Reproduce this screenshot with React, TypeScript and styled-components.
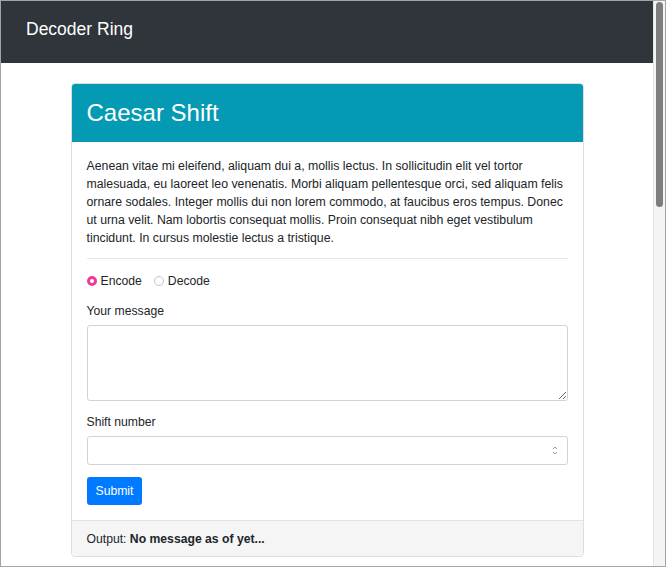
import styled, { createGlobalStyle } from "styled-components";

const GlobalStyle = createGlobalStyle`
  html, body {
    margin: 0;
    background: #fff;
  }
  body {
    font-family: "Liberation Sans", Arial, sans-serif;
    color: #212529;
  }
`;

const Frame = styled.div`
  width: 666px;
  height: 567px;
  box-sizing: border-box;
  border: 1px solid #a4a4a4;
  display: flex;
  overflow: hidden;
`;

const Viewport = styled.div`
  flex: 1;
  overflow: hidden;
  background: #fff;
`;

const Scrollbar = styled.div`
  width: 12px;
  box-sizing: border-box;
  background: #f4f4f4;
  border-left: 1px solid #e2e2e2;
  padding: 1px 0 0 2px;
`;

const Thumb = styled.div`
  width: 7px;
  height: 205px;
  border-radius: 4px;
  background: #7d7d7d;
`;

const Navbar = styled.nav`
  height: 62px;
  box-sizing: border-box;
  background: #30343b;
  display: flex;
  align-items: center;
  padding: 0 25px 5px;
`;

const Brand = styled.a`
  color: #fff;
  font-size: 17.5px;
  text-decoration: none;
`;

const Card = styled.section`
  max-width: 513px;
  margin: 20px auto 0;
  box-sizing: border-box;
  border: 1px solid #dedede;
  border-radius: 4px;
  overflow: hidden;
`;

const CardHeader = styled.header`
  height: 58px;
  background: #059ab4;
  display: flex;
  align-items: center;
  padding: 0 15px;
`;

const Title = styled.h4`
  margin: 0;
  color: #fff;
  font-size: 24px;
  font-weight: 400;
`;

const CardBody = styled.div`
  padding: 15px;
`;

const Intro = styled.p`
  margin: 0;
  font-size: 12.3px;
  line-height: 18px;
`;

const Divider = styled.hr`
  margin: 11px 0 13px;
  border: 0;
  border-top: 1px solid #e6e6e6;
`;

const RadioRow = styled.div`
  display: flex;
  gap: 12px;
  height: 18px;
  align-items: center;
  margin-bottom: 12px;
`;

const RadioLabel = styled.label`
  display: flex;
  align-items: center;
  gap: 4px;
  font-size: 12.2px;
`;

const Radio = styled.input`
  appearance: none;
  margin: 0;
  width: 10px;
  height: 10px;
  box-sizing: border-box;
  border-radius: 50%;
  border: 1px solid #c4c4c4;
  background: #fff;
  &:checked {
    border: 3px solid #f03a97;
  }
`;

const Field = styled.div<{ $gap: number }>`
  margin-bottom: ${(p) => p.$gap}px;
`;

const Label = styled.label`
  display: block;
  font-size: 12.2px;
  line-height: 18px;
  margin-bottom: 5px;
`;

const TextArea = styled.textarea`
  display: block;
  width: 100%;
  height: 76px;
  box-sizing: border-box;
  border: 1px solid #ced4da;
  border-radius: 3px;
  resize: vertical;
  font-family: inherit;
`;

const NumberWrap = styled.div`
  position: relative;
`;

const NumberInput = styled.input`
  display: block;
  width: 100%;
  height: 29px;
  box-sizing: border-box;
  border: 1px solid #ced4da;
  border-radius: 3px;
  font-family: inherit;
  &::-webkit-inner-spin-button,
  &::-webkit-outer-spin-button {
    -webkit-appearance: none;
    margin: 0;
  }
`;

const Spinner = styled.svg`
  position: absolute;
  right: 10px;
  top: 9px;
`;

const SubmitButton = styled.button`
  height: 28px;
  padding: 0 9px;
  border: 0;
  border-radius: 3px;
  background: #007bff;
  color: #fff;
  font-family: inherit;
  font-size: 12.2px;
`;

const CardFooter = styled.footer`
  border-top: 1px solid #e2e2e2;
  background: #f5f5f5;
  padding: 9px 15px 8px;
  font-size: 12.2px;
  line-height: 18px;
`;

export default function App() {
  return (
    <>
      <GlobalStyle />
      <Frame>
        <Viewport>
          <Navbar>
            <Brand href="#">Decoder Ring</Brand>
          </Navbar>
          <Card>
            <CardHeader>
              <Title>Caesar Shift</Title>
            </CardHeader>
            <CardBody>
              <Intro>
                Aenean vitae mi eleifend, aliquam dui a, mollis lectus. In sollicitudin elit vel
                tortor malesuada, eu laoreet leo venenatis. Morbi aliquam pellentesque orci, sed
                aliquam felis ornare sodales. Integer mollis dui non lorem commodo, at faucibus
                eros tempus. Donec ut urna velit. Nam lobortis consequat mollis. Proin consequat
                nibh eget vestibulum tincidunt. In cursus molestie lectus a tristique.
              </Intro>
              <Divider />
              <RadioRow>
                <RadioLabel>
                  <Radio type="radio" name="mode" defaultChecked />
                  Encode
                </RadioLabel>
                <RadioLabel>
                  <Radio type="radio" name="mode" />
                  Decode
                </RadioLabel>
              </RadioRow>
              <Field $gap={12}>
                <Label>Your message</Label>
                <TextArea />
              </Field>
              <Field $gap={12}>
                <Label>Shift number</Label>
                <NumberWrap>
                  <NumberInput type="number" />
                  <Spinner width="6" height="11" viewBox="0 0 6 11">
                    <path d="M1 4 L3 2 L5 4 M1 7 L3 9 L5 7" fill="none" stroke="#9a9a9a" strokeWidth="1" />
                  </Spinner>
                </NumberWrap>
              </Field>
              <SubmitButton type="button">Submit</SubmitButton>
            </CardBody>
            <CardFooter>
              Output: <strong>No message as of yet...</strong>
            </CardFooter>
          </Card>
        </Viewport>
        <Scrollbar>
          <Thumb />
        </Scrollbar>
      </Frame>
    </>
  );
}
